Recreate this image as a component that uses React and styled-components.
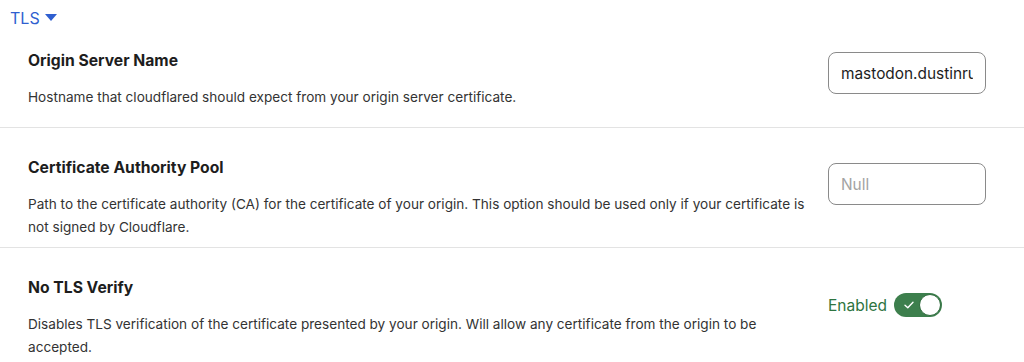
import React from 'react';
import styled, { createGlobalStyle } from 'styled-components';

const Global = createGlobalStyle`
    body {
        margin: 0;
        background: #fff;
        font-family: Inter, "Noto Sans", sans-serif;
        color: #1f1f1f;
    }
`;

const filas = [
    {
        titulo: 'Origin Server Name',
        texto: 'Hostname that cloudflared should expect from your origin server certificate.',
        tipo: 'input',
        valor: 'mastodon.dustinrue.com',
        arriba: 15,
        abajo: 18,
        control: 1,
    },
    {
        titulo: 'Certificate Authority Pool',
        texto: 'Path to the certificate authority (CA) for the certificate of your origin. This option should be used only if your certificate is not signed by Cloudflare.',
        tipo: 'input',
        placeholder: 'Null',
        arriba: 30,
        abajo: 8,
        control: 5,
    },
    {
        titulo: 'No TLS Verify',
        texto: 'Disables TLS verification of the certificate presented by your origin. Will allow any certificate from the origin to be accepted.',
        tipo: 'toggle',
        arriba: 30,
        abajo: 8,
        control: 15,
    },
];

const App = () => {
    return (
        <>
            <Global />
            <Pagina>
                <Cabecera>
                    TLS
                    <Triangulo viewBox="0 0 12 7">
                        <path d="M0 0 H12 L6 7 Z" fill="currentColor" />
                    </Triangulo>
                </Cabecera>
                {filas.map((f, i) => (
                    <Fila key={f.titulo} arriba={f.arriba} abajo={f.abajo} ultima={i === filas.length - 1}>
                        <Textos>
                            <Titulo>{f.titulo}</Titulo>
                            <Descripcion>{f.texto}</Descripcion>
                        </Textos>
                        <Control margen={f.control}>
                            {f.tipo === 'input' ? (
                                <Campo defaultValue={f.valor} placeholder={f.placeholder} />
                            ) : (
                                <Interruptor>
                                    <Estado>Enabled</Estado>
                                    <Pista>
                                        <Check viewBox="0 0 10 8">
                                            <path d="M1 4.2 L3.8 6.8 L9 1.2" fill="none" stroke="#fff" strokeWidth="1.4" strokeLinecap="round" strokeLinejoin="round" />
                                        </Check>
                                        <Perilla />
                                    </Pista>
                                </Interruptor>
                            )}
                        </Control>
                    </Fila>
                ))}
            </Pagina>
        </>
    );
}

const Pagina = styled.div`
    width: 1024px;
    height: 362px;
    overflow: hidden;
`;

const Cabecera = styled.div`
    height: 36px;
    padding-left: 10px;
    display: flex;
    align-items: center;
    gap: 5px;
    color: #2f5fd0;
    font-size: 16px;
`;

const Triangulo = styled.svg`
    width: 12px;
    height: 7px;
    margin-top: -2px;
`;

const Fila = styled.div`
    display: flex;
    align-items: flex-start;
    gap: 10px;
    padding: ${p => p.arriba}px 38px ${p => p.abajo}px 28px;
    border-bottom: ${p => p.ultima ? 'none' : '1px solid #e3e3e3'};
`;

const Textos = styled.div`
    flex: 1;
`;

const Titulo = styled.div`
    font-size: 15.7px;
    font-weight: 700;
    line-height: 20px;
    color: #1d1d1d;
    margin-bottom: 15px;
`;

const Descripcion = styled.div`
    font-size: 13.6px;
    line-height: 23px;
    color: #333;
`;

const Control = styled.div`
    width: 158px;
    flex-shrink: 0;
    margin-top: ${p => p.margen}px;
`;

const Campo = styled.input`
    box-sizing: border-box;
    width: 158px;
    height: 42px;
    border: 1px solid #8a8a8a;
    border-radius: 8px;
    padding: 0 12px;
    font-family: Inter, "Noto Sans", sans-serif;
    font-size: 15.4px;
    color: #1d1d1d;
    outline: none;

    &::placeholder {
        color: #a3a3a3;
    }
`;

const Interruptor = styled.div`
    display: flex;
    align-items: center;
    gap: 7px;
`;

const Estado = styled.span`
    font-size: 15.5px;
    color: #2e7440;
`;

const Pista = styled.div`
    position: relative;
    width: 48px;
    height: 24px;
    border-radius: 12px;
    background: #3d7f4d;
    box-sizing: border-box;
`;

const Check = styled.svg`
    position: absolute;
    left: 10px;
    top: 8px;
    width: 10px;
    height: 8px;
`;

const Perilla = styled.div`
    position: absolute;
    right: 1px;
    top: 1px;
    width: 22px;
    height: 22px;
    border-radius: 50%;
    background: #fff;
    box-sizing: border-box;
    border: 1px solid #2f6b3d;
`;

export default App;
